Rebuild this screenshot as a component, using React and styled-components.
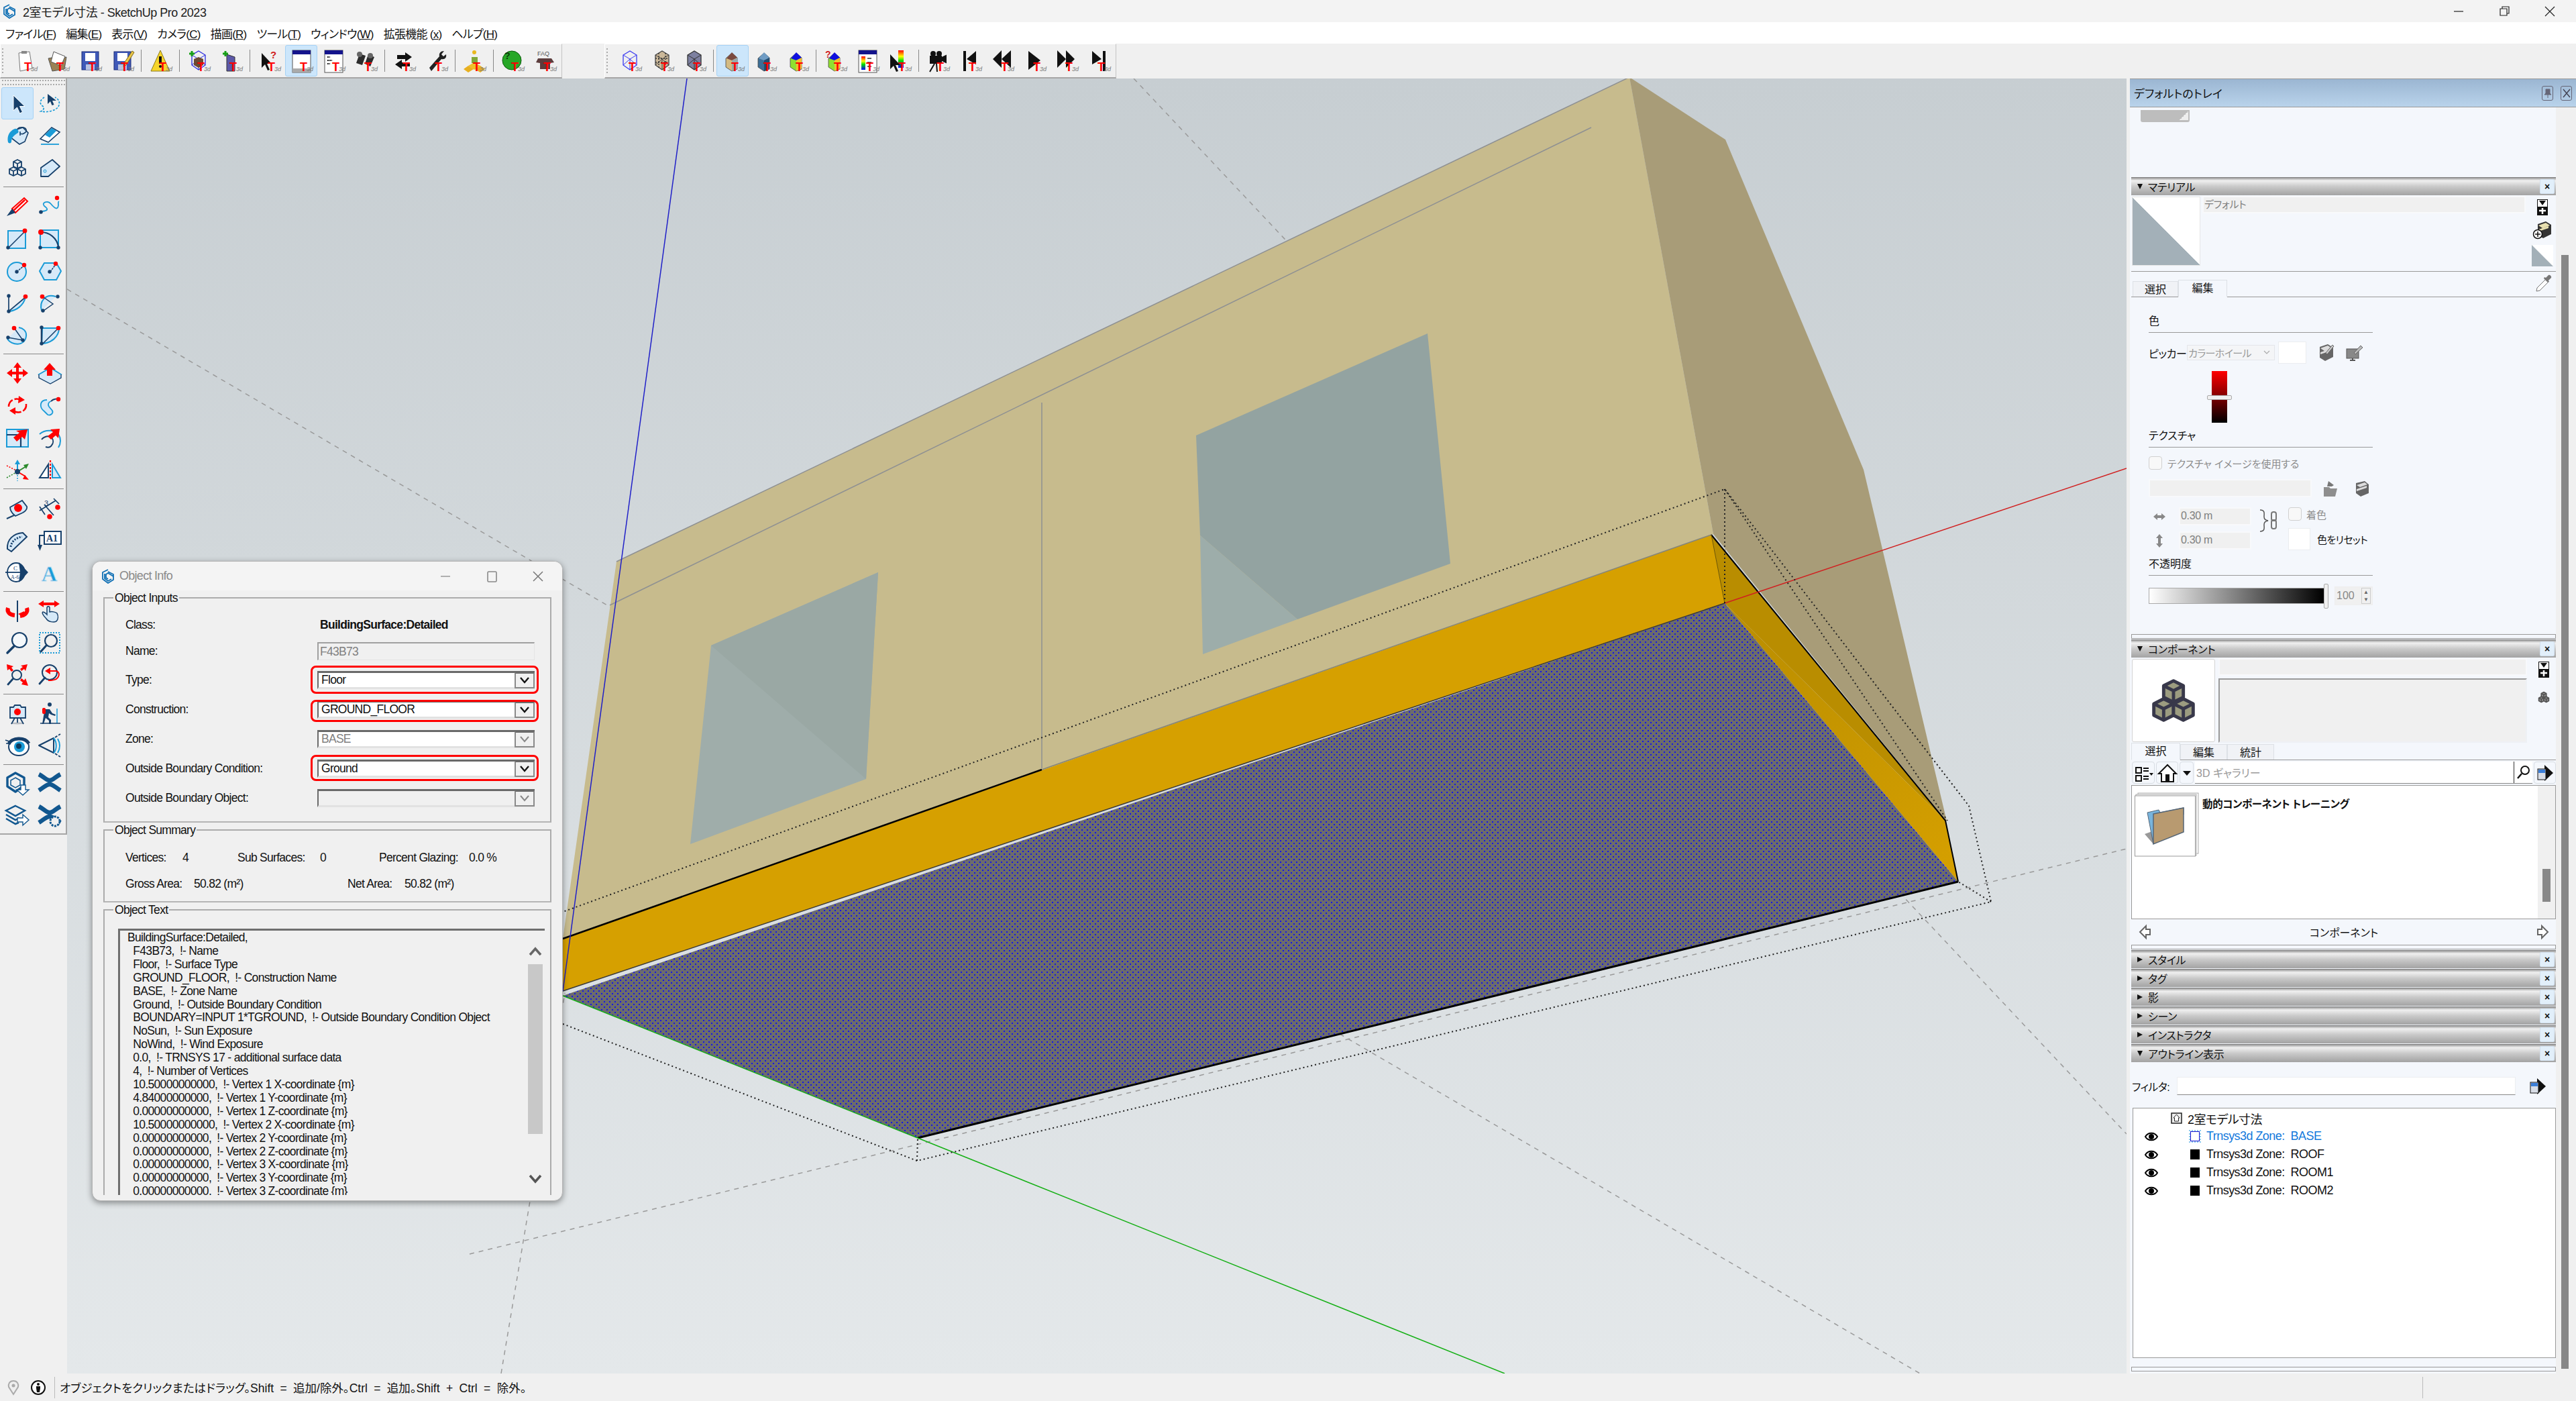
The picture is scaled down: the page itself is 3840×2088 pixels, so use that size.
import React from "react";
import styled, { createGlobalStyle } from "styled-components";

const UI_FONT = `"Liberation Sans", "Noto Sans CJK JP", sans-serif`;
const N = "#17406b";
const B = "#1a9bd7";
const L = "#d6e9f8";
const R = "#ff0000";
const TB = "#11578f";

const GlobalStyle = createGlobalStyle`
  html, body { margin: 0; padding: 0; background: #f0f0f0; }
  * { box-sizing: border-box; }
  body { font-family: ${UI_FONT}; font-feature-settings: "palt"; color: #111; }
`;

const Page = styled.div`
  width: 3840px;
  height: 2088px;
  display: flex;
  flex-direction: column;
  overflow: hidden;
  background: #f0f0f0;
`;

/* ---------- title + menu ---------- */
const TitleBar = styled.header`
  height: 33px;
  display: flex;
  align-items: center;
  padding-left: 3px;
  background: #f3f3f3;
  font-size: 18px;
  letter-spacing: -0.5px;
  color: #222;
  span { margin-left: 9px; }
`;
const WinControls = styled.div`
  margin-left: auto;
  display: flex;
  align-items: center;
  padding-right: ${(p) => p.$pr}px;
  gap: ${(p) => p.$gap}px;
`;
const MenuBar = styled.nav`
  height: 32px;
  display: flex;
  align-items: center;
  gap: 15px;
  padding-left: 8px;
  background: #fff;
  font-size: 17px;
  letter-spacing: -0.75px;
`;
const MenuItem = styled.span`
  white-space: pre;
`;

/* ---------- top toolbars ---------- */
const ToolRow = styled.div`
  height: 52px;
  display: flex;
  background: #f0f0f0;
`;
const ToolStrip = styled.div`
  display: flex;
  height: 52px;
  align-items: center;
  margin-left: ${(p) => p.$left || 0}px;
  padding-left: 13px;
  padding-right: 1px;
  border-top: 1px solid #fff;
  border-left: 1px solid #fff;
  border-right: 1px solid #c4c4c4;
  border-bottom: 2px solid #a6a6a6;
  background: #f0f0f0;
  position: relative;
  &::before {
    content: "";
    position: absolute;
    left: 2px;
    top: 6px;
    bottom: 6px;
    width: 2px;
    background: repeating-linear-gradient(#aaa 0 2px, transparent 2px 5px);
  }
`;
const ToolButton = styled.div`
  width: 48px;
  height: 47px;
  flex: none;
  display: flex;
  align-items: center;
  justify-content: center;
  border: 1px solid ${(p) => (p.$active ? "#a6d2f5" : "transparent")};
  border-radius: 3px;
  background: ${(p) => (p.$active ? "#cce6fb" : "transparent")};
`;
const ToolSep = styled.div`
  width: 9px;
  height: 33px;
  flex: none;
  background: linear-gradient(#888, #888) center / 1px 100% no-repeat;
`;

/* ---------- middle ---------- */
const Middle = styled.div`
  flex: 1;
  display: flex;
  min-height: 0;
`;
const LeftDock = styled.aside`
  width: 100px;
  flex: none;
  background: #f0f0f0;
`;
const LeftBar = styled.div`
  height: 1127px;
  padding-left: 2px;
  border-right: 2px solid #a6a6a6;
  border-bottom: 2px solid #a6a6a6;
`;
const LeftHandle = styled.div`
  height: 13px;
  width: 96px;
  background: radial-gradient(circle, #aaa 1px, transparent 1.3px) 0 0 / 4px 6px;
`;
const LeftGrid = styled.div`
  display: grid;
  grid-template-columns: 48px 48px;
  grid-auto-rows: 48px;
`;
const LeftSep = styled.div`
  height: 9px;
  margin: 0 3px;
  background: linear-gradient(#888, #888) center / 100% 1px no-repeat;
`;
const LeftButton = styled(ToolButton)`
  height: 48px;
`;

const Viewport = styled.main`
  position: relative;
  width: 3070px;
  flex: none;
  background: linear-gradient(#c7ced2, #e4e8ea);
  overflow: hidden;
`;
const Scene = styled.svg`
  display: block;
`;

/* ---------- object info dialog ---------- */
const Dialog = styled.section`
  position: absolute;
  left: 37px;
  top: 719px;
  width: 702px;
  height: 954px;
  background: #f0f0f0;
  border: 1px solid #b4b4b4;
  border-radius: 13px;
  box-shadow: 0 3px 10px rgba(0, 0, 0, 0.4);
  overflow: hidden;
  font-size: 17.5px;
  letter-spacing: -0.72px;
  color: #111;
`;
const DialogTitle = styled.div`
  height: 43px;
  display: flex;
  align-items: center;
  padding-left: 12px;
  background: #f4f4f4;
  font-size: 18px;
  color: #8a8a8a;
  span { margin-left: 6px; }
`;
const DialogBody = styled.div`
  height: 901px;
  padding: 0 16px;
  overflow: hidden;
`;
const Group = styled.fieldset`
  margin: 0;
  min-width: 0;
  height: ${(p) => p.$h}px;
  padding: 0 ${(p) => p.$pr || 0}px 0 ${(p) => p.$pl}px;
  border: 2px solid #ababab;
  border-bottom-color: #b5b5b5;
  legend {
    margin-left: ${(p) => 13 - p.$pl}px;
    padding: 0 2px;
    line-height: 22px;
    font-size: 17.5px;
  }
`;
const FormRow = styled.div`
  display: flex;
  align-items: center;
  height: 27px;
  margin-top: ${(p) => p.$mt}px;
`;
const FormLabel = styled.label`
  width: 286px;
  flex: none;
`;
const FormValue = styled.b`
  padding-left: 4px;
`;
const NameInput = styled.div`
  width: 324px;
  height: 27px;
  padding-left: 2px;
  line-height: 24px;
  color: #808080;
  background: #f0f0f0;
  border-top: 2px solid #a0a0a0;
  border-left: 2px solid #a0a0a0;
  border-right: 1px solid #e4e4e4;
  border-bottom: 1px solid #e4e4e4;
`;
const Combo = styled.div`
  position: relative;
  width: 324px;
  height: 27px;
  display: flex;
  align-items: center;
  padding-left: 4px;
  color: ${(p) => (p.$disabled ? "#808080" : "#111")};
  background: ${(p) => (p.$empty ? "#f0f0f0" : "#fff")};
  border-top: 3px solid #6a6a6a;
  border-left: 2px solid #6a6a6a;
  border-bottom: 3px solid #e2e2e2;
  ${(p) =>
    p.$ring &&
    `&::after {
      content: "";
      position: absolute;
      left: -12px;
      right: -6px;
      top: ${p.$ring[0]}px;
      bottom: ${p.$ring[1]}px;
      border: 3.5px solid #f00;
      border-radius: 8px;
      pointer-events: none;
    }`}
`;
const ComboArrow = styled.div`
  position: absolute;
  right: 0;
  top: -1px;
  width: 30px;
  height: 24px;
  display: flex;
  align-items: center;
  justify-content: center;
  background: #f0f0f0;
  border: 2px solid #8a8a8a;
  border-top-color: #6a6a6a;
`;
const SummaryRow = styled.div`
  display: grid;
  grid-template-columns: ${(p) => p.$cols};
  height: 24px;
  line-height: 24px;
  margin-top: ${(p) => p.$mt}px;
`;
const TextBox = styled.div`
  display: flex;
  height: 397px;
  margin-top: 17px;
  border-top: 3px solid #6f6f6f;
  border-left: 3px solid #6f6f6f;
  overflow: hidden;
`;
const TextLines = styled.pre`
  flex: 1;
  margin: 0;
  padding: 1px 0 0 11px;
  font: inherit;
  letter-spacing: -0.7px;
  line-height: 19.9px;
  white-space: pre;
`;
const TextScroll = styled.div`
  width: 22px;
  margin-right: 3px;
  flex: none;
  display: flex;
  flex-direction: column;
  align-items: center;
  padding-top: 24px;
`;
const TextThumb = styled.div`
  width: 22px;
  height: 253px;
  margin: 12px 0 60px;
  background: #c8c8c8;
`;

/* ---------- tray ---------- */
const Tray = styled.aside`
  width: 665px;
  flex: none;
  margin-left: 5px;
  display: flex;
  flex-direction: column;
`;
const TrayTitle = styled.div`
  height: 43px;
  display: flex;
  align-items: center;
  gap: 11px;
  padding: 0 6px;
  border-top: 1px solid #999;
  border-bottom: 1px solid #999;
  background: linear-gradient(#9bb6d2, #b9d3eb);
  font-size: 17px;
  span { margin-right: auto; }
`;
const TrayPin = styled.div`
  width: 17px;
  height: 22px;
  border: 1px solid #667;
  border-radius: 3px;
  display: flex;
  align-items: center;
  justify-content: center;
`;
const TrayBody = styled.div`
  flex: 1;
  display: flex;
  min-height: 0;
`;
const Panels = styled.div`
  width: 635px;
  flex: none;
  padding-left: 2px;
  background: #f4f7fc;
  overflow: hidden;
`;
const TrayGripRow = styled.div`
  height: 104px;
  padding: 4px 0 0 14px;
`;
const TrayGrip = styled.div`
  position: relative;
  width: 73px;
  height: 18px;
  background: #bdbdbd;
  border-radius: 0 0 3px 3px;
  &::after {
    content: "";
    position: absolute;
    right: 2px;
    bottom: 3px;
    width: 13px;
    height: 13px;
    background: linear-gradient(135deg, transparent 50%, #eee 50%);
  }
`;
const TrayScroll = styled.div`
  flex: 1;
  padding: 220px 11px 7px 8px;
  background: #f0f0f0;
`;
const TrayThumb = styled.div`
  height: 100%;
  background: #878787;
`;
const PanelHeader = styled.div`
  height: 27px;
  margin-bottom: ${(p) => p.$mb || 0}px;
  display: flex;
  align-items: center;
  padding-left: 9px;
  border-top: 1px solid #808080;
  background: linear-gradient(#9a9a9a, #f0f0f0 16%, #c9c9c9 50%, #a3a3a3);
  font-size: 16px;
  letter-spacing: -0.3px;
`;
const Caret = styled.div`
  width: 0;
  height: 0;
  margin-right: 8px;
  ${(p) =>
    p.$open
      ? "border-left: 4px solid transparent; border-right: 4px solid transparent; border-top: 8px solid #111;"
      : "border-top: 4px solid transparent; border-bottom: 4px solid transparent; border-left: 8px solid #111;"}
`;
const PanelClose = styled.div`
  margin-left: auto;
  width: 22px;
  height: 22px;
  margin-right: 2px;
  display: flex;
  align-items: center;
  justify-content: center;
  background: #e2effa;
  border: 1px solid #d2e0ee;
  border-radius: 2px;
  font-size: 14px;
  font-weight: bold;
`;
const ThinBox = styled.div`
  height: 7px;
  margin-top: ${(p) => p.$mt || 0}px;
  margin-bottom: 1px;
  border: 1px solid #999;
`;
const TopRow = styled.div`
  display: flex;
  height: ${(p) => p.$h}px;
  padding-top: 1px;
  border-bottom: ${(p) => (p.$rule ? "1px solid #999" : "none")};
`;
const Swatch = styled.div`
  width: 102px;
  height: 103px;
  margin: 1px 3px 0 1px;
  flex: none;
  background: linear-gradient(to top right, #a3b0b8 50%, #fff 50%);
  border: 1px solid #e6e6e6;
`;
const GreyField = styled.div`
  width: ${(p) => p.$w}px;
  height: ${(p) => p.$h}px;
  margin-top: ${(p) => p.$mt || 0}px;
  padding-left: 1px;
  line-height: 21px;
  font-size: ${(p) => p.$fs || 15}px;
  letter-spacing: -0.3px;
  color: #808080;
  background: #f0f0f0;
  border: 2px solid ${(p) => (p.$sunken ? "#eef1f5" : "#f8f9fb")};
  ${(p) => p.$sunken && "border-top-color:#999; border-left-color:#999;"}
`;
const SideIcons = styled.div`
  width: 40px;
  margin-left: 5px;
  flex: none;
  display: flex;
  flex-direction: column;
  align-items: center;
  gap: ${(p) => p.$gap}px;
  padding-top: 5px;
`;
const Tabs = styled.div`
  display: flex;
  align-items: flex-end;
  height: ${(p) => p.$h}px;
  padding-left: ${(p) => p.$pl || 0}px;
  border-bottom: 1px solid #999;
`;
const Tab = styled.div`
  width: ${(p) => p.$w}px;
  height: ${(p) => (p.$active ? 26 : 23)}px;
  text-align: center;
  font-size: 16px;
  line-height: 23px;
  background: ${(p) => (p.$active ? "#f4f7fc" : "#f0f2f6")};
  border: 1px solid #dde1e6;
  border-bottom: ${(p) => (p.$active ? "1px solid #f4f7fc" : "none")};
  margin-bottom: ${(p) => (p.$active ? -1 : 0)}px;
  position: relative;
`;
const TabIcon = styled.div`
  margin-left: auto;
  margin-right: 4px;
  align-self: center;
`;
const Editor = styled.div`
  height: 502px;
  padding-left: 26px;
  font-size: 16px;
`;
const SectionHead = styled.div`
  width: 334px;
  height: ${(p) => p.$h}px;
  display: flex;
  align-items: flex-end;
  padding-bottom: 5px;
  border-bottom: 1px solid #999;
  line-height: 22px;
`;
const PickerRow = styled.div`
  display: flex;
  align-items: center;
  height: 33px;
  margin-top: 13px;
  letter-spacing: -0.4px;
`;
const PickerLabel = styled.span`
  width: 54px;
  flex: none;
  white-space: nowrap;
`;
const PickerSelect = styled.div`
  width: 131px;
  height: 23px;
  margin-left: 3px;
  padding: 0 6px 0 1px;
  display: flex;
  align-items: center;
  justify-content: space-between;
  color: #999;
  font-size: 15px;
  letter-spacing: -0.6px;
  border: 1px solid #e4e6ea;
  background: #f4f5f7;
`;
const WhiteSwatch = styled.div`
  width: ${(p) => p.$w}px;
  height: ${(p) => p.$h}px;
  flex: none;
  margin-left: ${(p) => p.$ml || 0}px;
  background: #fff;
  border: 1px solid #ebedf0;
`;
const PickerIcon = styled.div`
  margin-left: ${(p) => p.$ml}px;
  display: flex;
`;
const ColorSlider = styled.div`
  position: relative;
  width: 23px;
  height: 77px;
  margin: 11px 0 0 94px;
  background: linear-gradient(#f00, #000);
`;
const SliderHandle = styled.div`
  position: absolute;
  left: -7px;
  top: 36px;
  width: 37px;
  height: 7px;
  background: #f0f0f0;
  border: 1px solid #aaa;
  border-radius: 2px;
`;
const CheckRow = styled.div`
  display: flex;
  align-items: center;
  gap: ${(p) => p.$gap || 8}px;
  height: 20px;
  margin-top: ${(p) => p.$mt || 0}px;
  color: #8c8c8c;
  font-size: 15px;
`;
const CheckBox = styled.div`
  width: 20px;
  height: 20px;
  flex: none;
  background: #f8f8f8;
  border: 1px solid #d0d0d0;
  border-radius: 4px;
`;
const FlatInput = styled.div`
  display: flex;
  align-items: center;
  height: 27px;
  margin-top: 14px;
  gap: 16px;
`;
const SizeRow = styled.div`
  display: flex;
  margin-top: 15px;
  height: 64px;
`;
const SizeFields = styled.div`
  width: 162px;
  flex: none;
  display: flex;
  flex-direction: column;
  gap: 9px;
`;
const SizeField = styled.div`
  display: flex;
  align-items: center;
  padding-left: 6px;
  gap: 19px;
`;
const TintCol = styled.div`
  margin-left: 6px;
  display: flex;
  flex-direction: column;
  gap: 11px;
`;
const ResetRow = styled.div`
  display: flex;
  align-items: center;
  gap: 10px;
  font-size: 15px;
  letter-spacing: -0.6px;
  white-space: nowrap;
`;
const OpacityRow = styled.div`
  display: flex;
  align-items: center;
  margin-top: 16px;
  height: 28px;
`;
const OpacityBar = styled.div`
  position: relative;
  width: 261px;
  height: 24px;
  background: linear-gradient(90deg, #fff, #000);
  border: 1px solid #aaa;
  border-right: none;
`;
const OpacityHandle = styled.div`
  position: absolute;
  right: -7px;
  top: -7px;
  width: 7px;
  height: 37px;
  background: #f0f0f0;
  border: 1px solid #aaa;
  border-radius: 2px;
`;
const SpinBox = styled.div`
  width: 57px;
  height: 28px;
  margin-left: 16px;
  display: flex;
  align-items: center;
  justify-content: space-between;
  padding: 0 2px;
  color: #888;
  font-size: 16px;
  background: #f0f0f0;
  border: 1px solid #eee;
`;
const SpinArrows = styled.div`
  display: flex;
  flex-direction: column;
  width: 14px;
  height: 24px;
  border: 1px solid #ccc;
  font-size: 8px;
  line-height: 11px;
  text-align: center;
  color: #666;
`;
const Thumb = styled.div`
  width: 124px;
  height: 124px;
  margin: 1px 5px 0 1px;
  flex: none;
  display: flex;
  align-items: center;
  justify-content: center;
  background: #fff;
  border: 1px solid #d4d4d4;
  border-radius: 3px;
`;
const CompFields = styled.div`
  display: flex;
  flex-direction: column;
`;
const Toolbox = styled.div`
  display: flex;
  height: 33px;
  margin: 2px 0 2px 1px;
  gap: 2px;
`;
const SquareBtn = styled.div`
  width: ${(p) => p.$w}px;
  flex: none;
  display: flex;
  align-items: center;
  justify-content: center;
  background: #f4f7fc;
  border: 1px solid #d8dde3;
  border-radius: 4px;
`;
const SearchBox = styled.div`
  flex: 1;
  display: flex;
  align-items: center;
  justify-content: space-between;
  background: #fff;
  border-bottom: 1px solid #888;
  color: #999;
  font-size: 16px;
  padding-left: 2px;
`;
const SearchGlass = styled.div`
  width: 28px;
  height: 100%;
  display: flex;
  align-items: center;
  justify-content: center;
  border-left: 1px solid #333;
`;
const ListBox = styled.div`
  display: flex;
  height: 200px;
  background: #fff;
  border: 1px solid #999;
`;
const ListMain = styled.div`
  flex: 1;
  display: flex;
  padding: 10px 0 0 4px;
  gap: 5px;
`;
const ListText = styled.b`
  font-size: 15.5px;
  letter-spacing: -0.3px;
  line-height: 36px;
`;
const ListScroll = styled.div`
  width: 26px;
  padding: 124px 7px 0 7px;
  background: #f0f0f0;
`;
const ListThumb = styled.div`
  height: 49px;
  background: #888;
`;
const CompFooter = styled.div`
  height: 38px;
  display: flex;
  align-items: center;
  justify-content: space-between;
  padding: 0 10px 0 11px;
  font-size: 16px;
`;
const FilterRow = styled.div`
  display: flex;
  align-items: center;
  height: 27px;
  margin-top: 22px;
  font-size: 16px;
  letter-spacing: -0.5px;
  padding-left: 1px;
`;
const FilterInput = styled.div`
  width: 505px;
  height: 27px;
  margin-left: 11px;
  margin-right: 20px;
  background: #fff;
  border: 1px solid #eceef1;
  border-bottom: 1px solid #888;
`;
const Tree = styled.div`
  height: 373px;
  margin: 19px 0 0 2px;
  padding-top: 1px;
  background: #fff;
  border: 1px solid #999;
  font-size: 18px;
  letter-spacing: -0.55px;
`;
const TreeRow = styled.div`
  display: flex;
  align-items: center;
  height: 27px;
  padding-left: ${(p) => p.$pl}px;
  gap: ${(p) => p.$gap}px;
  color: ${(p) => p.$color || "#111"};
`;
const EyeSlot = styled.div`
  width: 20px;
  flex: none;
  margin-right: 38px;
  display: flex;
`;
const ZoneMark = styled.div`
  width: 14px;
  height: 15px;
  flex: none;
  background: ${(p) => (p.$hollow ? "#fff" : "#000")};
  border: ${(p) => (p.$hollow ? "1px solid #1414d0" : "none")};
  outline: ${(p) => (p.$hollow ? "2px dotted #8cc8ee" : "none")};
`;

/* ---------- status bar ---------- */
const StatusBar = styled.footer`
  height: 41px;
  display: flex;
  align-items: center;
  padding-left: 9px;
  background: #f0f0f0;
  font-size: 17.5px;
  word-spacing: 4.5px;
`;
const StatusInfo = styled.div`
  margin-left: 14px;
  display: flex;
`;
const StatusDivider = styled.div`
  width: 1px;
  height: 32px;
  flex: none;
  background: #bbb;
  margin-left: ${(p) => p.$ml || 0}px;
`;
const StatusText = styled.span`
  margin-left: 7px;
  white-space: pre;
  width: 3522px;
  flex: none;
`;

/* ---------- small drawings ---------- */
const Glyph = ({ size = 36, vb = 36, children }) => (
  <svg width={size} height={size} viewBox={`0 0 ${vb} ${vb}`} fill="none" overflow="visible">
    {children}
  </svg>
);
const Dot = ({ x, y, c = N, r = 2.7 }) => <circle cx={x} cy={y} r={r} fill={c} />;

const SkpLogo = ({ size = 22 }) => (
  <svg width={size} height={size} viewBox="0 0 22 22" fill="none" stroke="#0f6fb4" strokeWidth="1.8">
    <path d="M11 1 3 5v10l8 6 8-5V11l-8-5-3 2v5l3 2" />
    <path d="M11 4l8 4v3M6 7v7l5 4 5-3" />
  </svg>
);

const CHEVRON_BLACK = (
  <svg width="14" height="10" viewBox="0 0 14 10" fill="none" stroke="#111" strokeWidth="2.4">
    <path d="M1 1l6 7 6-7" />
  </svg>
);
const CHEVRON_GREY = (
  <svg width="14" height="10" viewBox="0 0 14 10" fill="none" stroke="#888" strokeWidth="2">
    <path d="M1 1l6 7 6-7" />
  </svg>
);

const Cubes = ({ c = N, fill = "none", sw = 1.8 }) => (
  <g stroke={c} strokeWidth={sw} fill={fill} strokeLinejoin="round">
    <path d="M18 6l6 3v7l-6 3-6-3V9z" />
    <path d="M12 9l6 3 6-3M18 12v7" />
    <path d="M12 17l6 3v7l-6 3-6-3v-7z" />
    <path d="M6 20l6 3 6-3M12 23v7" />
    <path d="M24 17l6 3v7l-6 3-6-3v-7z" />
    <path d="M18 20l6 3 6-3M24 23v7" />
  </g>
);

const TrimbleX = () => (
  <g stroke={TB} strokeWidth="6.5" fill="none">
    <path d="M2 4c8 4 11 9 16 9s8-5 16-9" />
    <path d="M2 28c8-5 11-9 16-9s8 4 16 9" />
  </g>
);

const TOOLS = {
  select: <path d="M12 6v23l5.5-5 4 9 4-2-4-8.5h7.5z" fill={N} stroke="#fff" />,
  lasso: (
    <>
      <path d="M15 4v15l4-4 2.5 6 3-1-2.5-6h6z" fill={N} />
      <path d="M10 9c-8 5-7 11-1 14 1 3-1 6-4 7 9 2 22-1 26-7 3-6 1-11-5-14" stroke={B} strokeWidth="1.7" strokeDasharray="3 2" />
    </>
  ),
  paint: (
    <>
      <path d="M14 10l12-4 8 8-5 13-8 4-13-10z" fill={L} stroke={N} strokeWidth="1.6" />
      <path d="M18 8c3-3 11-3 13 1s-6 8-8 6M22 12v6" stroke={N} strokeWidth="1.6" />
      <path d="M14 8C6 11 2 19 4 28c1 2 5 2 5-1 0-7 6-11 10-13 2-3-2-7-5-6z" fill={B} />
    </>
  ),
  eraser: (
    <>
      <path d="M4 23L21 6l12 7-17 15z" fill="#fff" stroke={N} strokeWidth="1.6" />
      <path d="M11 17l10-10 7 4-10 10z" fill={B} />
      <path d="M5 31h27" stroke={B} strokeWidth="1.8" />
    </>
  ),
  components: <Cubes />,
  tag: (
    <>
      <path d="M5 18L22 6l11 10-17 15H5z" fill={L} stroke={N} strokeWidth="1.8" strokeLinejoin="round" />
      <circle cx="11" cy="23" r="2" stroke={B} />
    </>
  ),
  pencil: (
    <>
      <path d="M10 22L28 6l5 5-18 17z" fill="#fff" stroke={R} strokeWidth="2" />
      <path d="M13 24L29 9" stroke={R} strokeWidth="2.5" />
      <path d="M2 33l8-11 5 6z" fill={N} />
    </>
  ),
  freehand: (
    <>
      <path d="M7 26c8-1 10-3 3-8-5-5 5-9 10-3s10 10 11 2c0-4-1-5 1-6" stroke={B} strokeWidth="1.8" />
      <Dot x={29} y={6} c={R} r={3.2} />
      <Dot x={5} y={27} r={2.8} />
    </>
  ),
  rect: (
    <>
      <rect x="4" y="7" width="26" height="26" fill={L} stroke={B} strokeWidth="2" />
      <path d="M5 32L29 8" stroke={N} strokeWidth="1.6" />
      <Dot x={4} y={32} />
      <Dot x={29} y={7} c={R} r={3.4} />
    </>
  ),
  rotrect: (
    <>
      <path d="M4 6h27v26H4z" fill={L} stroke={B} strokeWidth="2" />
      <path d="M5 9c13 0 24 9 26 22" stroke={N} strokeWidth="2" />
      <Dot x={4} y={32} />
      <Dot x={31} y={32} />
      <Dot x={5} y={9} c={R} r={4} />
    </>
  ),
  circle: (
    <>
      <circle cx="17" cy="20" r="14" fill={L} stroke={B} strokeWidth="2" />
      <path d="M17 20l12-10" stroke={N} strokeWidth="1.5" strokeDasharray="3 1" />
      <Dot x={17} y={20} />
      <Dot x={28} y={10} c={R} r={3.2} />
    </>
  ),
  polygon: (
    <>
      <path d="M10 7h18l7 12-7 13H10L3 19z" fill={L} stroke={B} strokeWidth="2" />
      <path d="M19 20l8-11" stroke={N} strokeWidth="1.5" strokeDasharray="3 1" />
      <Dot x={18} y={20} />
      <Dot x={27} y={8} c={R} r={3.2} />
    </>
  ),
  arc1: (
    <>
      <path d="M5 31c12-1 22-9 25-21" fill={L} stroke={B} strokeWidth="2" />
      <path d="M5 8v23L30 10" stroke={N} strokeWidth="1.7" />
      <Dot x={5} y={8} />
      <Dot x={5} y={31} />
      <Dot x={30} y={9} c={R} r={3.3} />
    </>
  ),
  arc2: (
    <>
      <path d="M6 30C2 16 12 4 27 9" fill={L} stroke={B} strokeWidth="2" />
      <path d="M6 8l17 12-14 10" stroke={N} strokeWidth="1.5" />
      <Dot x={8} y={30} />
      <Dot x={30} y={9} />
      <Dot x={7} y={9} c={R} r={3.3} />
    </>
  ),
  arc3: (
    <>
      <path d="M3 24c6 10 26 12 28-4C32 12 26 8 20 7" fill={L} stroke={B} strokeWidth="2" />
      <path d="M4 22l22 4L14 9" stroke={N} strokeWidth="1.5" />
      <Dot x={4} y={22} />
      <Dot x={26} y={26} />
      <Dot x={13} y={8} c={R} r={3.3} />
    </>
  ),
  arc4: (
    <>
      <path d="M6 31c14 0 26-10 26-23H7z" fill={L} stroke={B} strokeWidth="2" />
      <path d="M6 8v23" stroke={N} strokeWidth="2.5" />
      <path d="M8 31L30 9" stroke={N} strokeWidth="1.5" />
      <Dot x={6} y={7} />
      <Dot x={6} y={31} />
      <Dot x={31} y={8} c={R} r={3.3} />
    </>
  ),
  move: <path d="M18 2l6 8h-4v6h6v-4l8 6-8 6v-4h-6v6h4l-6 8-6-8h4v-6h-6v4l-8-6 8-6v4h6v-6h-4z" fill={R} />,
  pushpull: (
    <>
      <path d="M2 20l14-8h6l13 8-16 10z" fill={L} stroke={B} strokeWidth="1.8" />
      <path d="M2 20v5l17 9 16-9v-5" fill={L} stroke={N} strokeWidth="1.4" />
      <path d="M18 3l9 10h-5v9h-8v-9H9z" fill={R} />
    </>
  ),
  rotate: (
    <>
      <path d="M5 20C5 11 14 6 23 10" stroke={R} strokeWidth="2.5" strokeDasharray="12 3" />
      <path d="M31 16c1 10-9 15-18 11" stroke={R} strokeWidth="2.5" strokeDasharray="12 3" />
      <path d="M20 4l9 6-10 5zM15 21l-9 5 9 6z" fill={R} />
    </>
  ),
  follow: (
    <>
      <path d="M14 10C3 10 2 21 10 27l5 5c4 2 9-2 7-6l-5-6c-2-3-1-7 3-8" fill={L} stroke={B} strokeWidth="1.8" />
      <path d="M20 12c4-4 9-4 12-2" stroke={N} strokeWidth="1.8" />
      <Dot x={31} y={9} c={R} r={3.2} />
    </>
  ),
  scale: (
    <>
      <rect x="2" y="6" width="32" height="26" fill={L} stroke={B} strokeWidth="2" />
      <path d="M2 14h21v18" stroke={N} strokeWidth="2.2" fill="none" />
      <path d="M33 6l-4 15-4-4-8 7-5-6 9-7-5-3z" fill={R} />
    </>
  ),
  offset: (
    <>
      <path d="M3 13C11 6 24 6 31 13c4 6 4 14 0 20" stroke={B} strokeWidth="2" />
      <path d="M6 21c4-5 10-6 15-3 3 4 3 9-1 13-2 2-5 2-8 1" stroke={N} strokeWidth="2" />
      <path d="M33 5l-2 14-4-4-7 6-5-5 8-6-4-4z" fill={R} />
    </>
  ),
  axes: (
    <>
      <path d="M18 19V8" stroke={B} strokeWidth="2" />
      <path d="M18 3l4 7h-8z" fill={B} />
      <path d="M18 21l13-8" stroke="#2c8a2c" strokeWidth="2" />
      <path d="M35 9l-4 8-4-6z" fill="#2c8a2c" />
      <path d="M18 21l12 7" stroke={R} strokeWidth="2" />
      <path d="M35 33l-9-1 3-6z" fill={R} />
      <path d="M2 12l14 7" stroke={R} strokeWidth="1.5" strokeDasharray="2 2" />
      <path d="M2 30l14-8" stroke="#2c8a2c" strokeWidth="1.5" strokeDasharray="2 2" />
      <path d="M18 26v9" stroke={B} strokeWidth="1.5" strokeDasharray="2 2" />
      <Dot x={18} y={21} r={4} />
    </>
  ),
  mirror: (
    <>
      <path d="M3 30L16 10v20z" fill="#fff" stroke={N} strokeWidth="2" />
      <path d="M22 10l12 20H22z" fill={L} stroke={B} strokeWidth="2" />
      <path d="M19 4v30" stroke={R} strokeWidth="2.2" strokeDasharray="3 2" />
    </>
  ),
  tape: (
    <>
      <path d="M7 17L25 7l7 9c1 4-3 8-8 10l-9 4c-4-3-8-8-8-13z" fill={L} stroke={N} strokeWidth="1.8" />
      <circle cx="19" cy="18" r="6" fill={R} />
      <path d="M2 34l11-5" stroke={N} strokeWidth="2" />
    </>
  ),
  dimension: (
    <>
      <path d="M3 22L27 7M10 13l14 16M24 4l8 8M3 16l8 12" stroke={N} strokeWidth="1.7" />
      <text x="10" y="15" fontSize="11" fill={N} fontFamily="Liberation Sans">3</text>
      <Dot x={30} y={17} c={R} r={3.8} />
      <Dot x={18} y={31} c={R} r={3.8} />
    </>
  ),
  protractor: (
    <>
      <path d="M3 31C2 17 12 8 26 7l6 6L9 35z" fill={L} stroke={N} strokeWidth="2" />
      <path d="M8 28C9 20 16 14 25 13" stroke={N} strokeWidth="3" strokeDasharray="2 2" />
    </>
  ),
  label: (
    <>
      <rect x="10" y="5" width="25" height="19" fill="#fff" stroke={N} strokeWidth="2" />
      <text x="13" y="20" fontSize="14" fontWeight="bold" fill={N} fontFamily="Liberation Serif">A1</text>
      <path d="M10 11H3v18" stroke={N} strokeWidth="2" />
      <path d="M0 25h7l-3.5 9z" fill={N} />
    </>
  ),
  section: (
    <>
      <ellipse cx="16" cy="18" rx="13" ry="14" fill="#fff" stroke={N} strokeWidth="1.8" />
      <path d="M0 18h28" stroke={N} strokeWidth="1.8" />
      <path d="M20 3l14 15-14 15 2-15z" fill={N} />
      <text x="12" y="15" fontSize="9" fill={N} fontFamily="Liberation Serif">C</text>
      <text x="8" y="28" fontSize="8" fill={N} fontFamily="Liberation Serif">A-6</text>
    </>
  ),
  text3d: (
    <text x="6" y="31" fontSize="32" fontWeight="bold" fill={B} fontFamily="Liberation Serif" stroke="#bfdcf0" strokeWidth="1">A</text>
  ),
  orbit: (
    <>
      <path d="M4 14C2 20 6 24 14 25M32 14c2 6-2 11-10 12" stroke={R} strokeWidth="6" />
      <path d="M18 3v32" stroke={N} strokeWidth="2" />
      <path d="M19 23l9-4v9z" fill={R} />
    </>
  ),
  pan: (
    <>
      <path d="M1 8l8-5v3h16V3l8 5-8 5v-3H9v3z" fill={R} />
      <path d="M13 30C8 25 6 21 8 20c3 0 4 2 6 4V14c0-3 4-3 4 0v6c3-1 9 0 11 2 2 4 2 9-1 12-4 2-12 1-15-4z" fill={L} stroke={N} strokeWidth="1.5" />
    </>
  ),
  zoom: (
    <>
      <circle cx="21" cy="14" r="11" fill="#f4f8fb" stroke={N} strokeWidth="2.2" />
      <path d="M13 23L3 33" stroke={N} strokeWidth="3.5" strokeLinecap="round" />
    </>
  ),
  zoomwin: (
    <>
      <rect x="3" y="3" width="30" height="30" stroke={B} strokeWidth="2" strokeDasharray="2 2" />
      <circle cx="20" cy="15" r="9" stroke={N} strokeWidth="2.2" />
      <path d="M13 22l-8 9" stroke={N} strokeWidth="3" strokeLinecap="round" />
    </>
  ),
  zoomext: (
    <>
      <circle cx="17" cy="18" r="7" stroke={N} strokeWidth="2" />
      <path d="M11 24l-7 8" stroke={N} strokeWidth="2.8" strokeLinecap="round" />
      <path d="M2 2l10 3-3 2 3 4-3 2-3-4-3 2zM33 2l-3 10-2-3-4 3-2-3 4-3-3-2zM34 34l-10-2 2-3-4-3 2-3 4 3 2-3z" fill={R} />
    </>
  ),
  zoomprev: (
    <>
      <circle cx="18" cy="14" r="11" stroke={N} strokeWidth="2" />
      <path d="M11 22l-8 9" stroke={N} strokeWidth="2.8" strokeLinecap="round" />
      <path d="M19 12h8c7 0 8 13-7 14h-4" stroke={R} strokeWidth="2" />
      <path d="M11 12l8-5v10z" fill={R} />
    </>
  ),
  position: (
    <>
      <ellipse cx="18" cy="33" rx="10" ry="1.5" fill="#b8bcc2" />
      <path d="M7 9h5l2-3h8l2 3h6v16H7z" fill={L} stroke={N} strokeWidth="1.8" />
      <circle cx="18" cy="16" r="5" fill={R} />
      <path d="M14 25l-5 9M22 25l5 9M18 25v7" stroke={N} strokeWidth="1.8" />
    </>
  ),
  walk: (
    <>
      <circle cx="18" cy="5" r="3" fill={N} />
      <path d="M11 12h7l4 6 5 2-1 2-6-2-3-2-1 6 4 4v6h-3v-5l-5-4-3 9H7l2-12z" fill={N} />
      <rect x="7" y="10" width="5" height="9" rx="2" fill={R} />
      <path d="M29 11v22" stroke={B} strokeWidth="1.5" />
      <path d="M4 33h30" stroke={N} strokeWidth="1.5" />
    </>
  ),
  look: (
    <>
      <ellipse cx="20" cy="20" rx="15" ry="13" fill="#fff" stroke={N} strokeWidth="2" />
      <circle cx="21" cy="20" r="8" fill={B} />
      <circle cx="20" cy="19" r="4" fill="#0a3a5e" />
      <path d="M5 16C9 6 29 5 35 15" stroke={N} strokeWidth="5" />
      <path d="M0 10l9 3M1 15l7 0" stroke={N} strokeWidth="1.6" />
    </>
  ),
  fov: (
    <>
      <path d="M2 18L24 7v22z" stroke={N} strokeWidth="2" strokeLinejoin="round" fill="#f0f0f0" />
      <path d="M24 7c5 6 5 17 0 22" stroke={B} strokeWidth="2" />
      <path d="M30 8c4 7 4 14 0 21" stroke={B} strokeWidth="2" />
      <path d="M26 6l8-5M26 30l8 5" stroke={N} strokeWidth="1.8" strokeDasharray="4 2" />
    </>
  ),
  trim1: (
    <>
      <path d="M15 2l13 7v12l-13 9-12-8V9z" stroke={TB} strokeWidth="3.4" strokeLinejoin="round" />
      <path d="M15 9l7 4v7l-7 4-7-4v-7z" stroke={TB} strokeWidth="1.5" />
      <path d="M23 20h7v7h5l-9 8-9-8h6z" fill="#fff" stroke={TB} strokeWidth="1.4" />
    </>
  ),
  trim2: <TrimbleX />,
  trim3: (
    <>
      <path d="M15 3l14 7-14 8-14-8z" stroke={TB} strokeWidth="2.5" />
      <path d="M1 16l14 8 6-3M1 22l14 8 5-2" stroke={TB} strokeWidth="2.5" />
      <path d="M18 21h8v-5l9 8-9 8v-5h-8z" fill="#fff" stroke={TB} strokeWidth="1.4" />
    </>
  ),
  trim4: (
    <>
      <TrimbleX />
      <circle cx="26" cy="26" r="7" fill="#f0f0f0" stroke={TB} strokeWidth="3" strokeDasharray="3 1.5" />
    </>
  ),
};

const LEFT_GROUPS = [
  ["select", "lasso", "paint", "eraser", "components", "tag"],
  ["pencil", "freehand", "rect", "rotrect", "circle", "polygon", "arc1", "arc2", "arc3", "arc4"],
  ["move", "pushpull", "rotate", "follow", "scale", "offset", "axes", "mirror"],
  ["tape", "dimension", "protractor", "label", "section", "text3d"],
  ["orbit", "pan", "zoom", "zoomwin", "zoomext", "zoomprev"],
  ["position", "walk", "look", "fov"],
  ["trim1", "trim2", "trim3", "trim4"],
];

const Badge = () => (
  <>
    <text x="16" y="33" fontSize="18" fontWeight="bold" fill="#f00" fontFamily="Liberation Sans">T</text>
    <text x="26" y="33" fontSize="9" fontStyle="italic" fill="#777" fontFamily="Liberation Sans">3d</text>
  </>
);

const HOUSE = (wall, roof, side) => (
  <>
    <path d="M8 14l9-8 8 7v17l-8 3-9-6z" fill={wall} stroke="#444" strokeWidth="0.8" />
    <path d="M9 14l8-9 8 8-8 4z" fill={roof} />
    <path d="M17 17l8-4v16l-8 4z" fill={side} />
  </>
);
const WIRE = (stroke, face) => (
  <>
    <path d="M8 9l10-6 10 6v15l-10 7-10-7z" fill={face} stroke={stroke} strokeWidth="1.3" />
    <path d="M8 9l10 6 10-6M18 15v16M8 24l10-9 10 9" stroke={stroke} strokeWidth="1" />
  </>
);
const TOP = {
  fresh: (
    <>
      <path d="M8 6l16-2 4 25-18 4z" fill="#fff" stroke="#777" />
      <path d="M12 3h8v4h-8z" fill="#888" />
    </>
  ),
  open: (
    <>
      <path d="M4 14l10-2 3 3 14-3-3 18-18 3z" fill="#9a8255" stroke="#555" />
      <path d="M12 4l17 7-6 14-15-6z" fill="#fff" stroke="#555" />
    </>
  ),
  save: (
    <>
      <rect x="6" y="4" width="25" height="27" fill="#3f59b8" stroke="#1c2d78" />
      <rect x="11" y="6" width="15" height="12" fill="#fff" />
      <rect x="12" y="23" width="13" height="8" fill="#b8c2e0" />
    </>
  ),
  saveas: (
    <>
      <rect x="6" y="4" width="25" height="27" fill="#3f59b8" stroke="#1c2d78" />
      <rect x="11" y="6" width="15" height="12" fill="#fff" />
      <rect x="12" y="23" width="13" height="8" fill="#b8c2e0" />
      <path d="M33 3l3 2-12 19-4 2 1-5z" fill="#e9c64a" stroke="#7a6514" />
    </>
  ),
  warn: (
    <>
      <path d="M18 2l14 31H4z" fill="#f6d52a" stroke="#8a7a20" />
      <rect x="16" y="11" width="4" height="11" fill="#111" />
      <circle cx="18" cy="26" r="2" fill="#111" />
    </>
  ),
  zone: (
    <>
      {WIRE("#2a2ae0", "none")}
      <path d="M11 15l7-3 7 3v9l-7 4-7-4z" fill="#6b4a34" />
      <path d="M4 7h8M8 3v8" stroke="#18a018" strokeWidth="3" />
    </>
  ),
  windowAdd: (
    <>
      <path d="M12 8l12 4v21H12z" fill="#5c58a8" stroke="#333" />
      <path d="M6 7h8M10 3v8" stroke="#18a018" strokeWidth="3" />
    </>
  ),
  pick: (
    <>
      <path d="M7 6v22l5-5 4 9 3-1-4-9h7z" fill="#111" />
      <text x="20" y="14" fontSize="15" fontWeight="bold" fill="#d02020" fontFamily="Liberation Sans">?</text>
    </>
  ),
  infoWin: (
    <>
      <rect x="5" y="2" width="27" height="33" fill="#fff" stroke="#555" />
      <rect x="5" y="2" width="27" height="6" fill="#14148c" />
      <rect x="5" y="29" width="27" height="6" fill="#aaa" />
    </>
  ),
  listWin: (
    <>
      <rect x="5" y="2" width="27" height="33" fill="#fff" stroke="#555" />
      <rect x="5" y="2" width="27" height="6" fill="#14148c" />
      <path d="M9 12h4M9 17h7M9 22h4" stroke="#111" strokeWidth="2" strokeDasharray="2 1" />
    </>
  ),
  binoculars: (
    <>
      <path d="M9 7l9 3-5 14-9-3zM22 8l9 4-6 14-8-4z" fill="#2c2c2c" />
      <circle cx="9" cy="8" r="4" fill="#666" />
      <circle cx="25" cy="10" r="4" fill="#666" />
    </>
  ),
  swap: <path d="M20 5l10 7-10 7v-4H8v-6h12zM15 16v4h12v6H15v4L5 23z" fill="#111" />,
  wrench: <path d="M30 3c-5 0-8 3-7 8L8 28l3 5 15-18c5 1 8-2 7-7l-4 3-3-3z" fill="#222" />,
  yellowCubes: (
    <>
      <circle cx="18" cy="5" r="3" fill="#e8b820" />
      <rect x="14" y="12" width="9" height="9" fill="#80a838" />
      <path d="M18 20l9 5-9 6-9-6z" fill="#efc028" />
      <path d="M9 25l8 5-8 5-7-5zM27 25l7 5-7 5-8-5z" fill="#e8b020" />
    </>
  ),
  helpGreen: (
    <>
      <circle cx="17" cy="17" r="14" fill="#27a727" stroke="#0c5a0c" />
      <text x="6" y="15" fontSize="14" fontWeight="bold" fill="#0c3c0c" fontFamily="Liberation Sans">?</text>
    </>
  ),
  faq: (
    <>
      <text x="7" y="10" fontSize="9" fill="#555" fontFamily="Liberation Sans">FAQ</text>
      <path d="M8 14h20l4 6-6 1v9H11v-9l-6-1z" fill="#5c3c3c" />
    </>
  ),
  wireBlue: WIRE("#3a3af0", "none"),
  wireGrid: (
    <>
      {WIRE("#444", "#cbb899")}
      <path d="M8 14h20M8 20h20M13 6v24M23 6v24" stroke="#333" strokeWidth="1.4" strokeDasharray="2 2" />
    </>
  ),
  wireGrey: WIRE("#333", "#7d80a0"),
  houseTan: HOUSE("#d4bb83", "#7a4a40", "#9aa8ac"),
  houseBlue: HOUSE("#3c6e96", "#6f9cc4", "#224c70"),
  houseGreen: HOUSE("#90e030", "#1010e0", "#f0c030"),
  houseHelp: (
    <>
      {HOUSE("#90e030", "#1010e0", "#f0c030")}
      <text x="3" y="13" fontSize="14" fontWeight="bold" fill="#d02020" fontFamily="Liberation Sans">?</text>
    </>
  ),
  scaleWin: (
    <>
      <rect x="5" y="2" width="27" height="33" fill="#fff" stroke="#555" />
      <rect x="5" y="2" width="27" height="6" fill="#14148c" />
      <rect x="9" y="11" width="6" height="20" fill="url(#rainbow)" />
      <path d="M18 14h6M18 20h6M18 26h6" stroke="#333" strokeWidth="1.5" />
    </>
  ),
  pickScale: (
    <>
      <rect x="16" y="2" width="8" height="26" fill="url(#rainbow)" />
      <path d="M4 8v22l5-5 4 9 3-1-4-9h7z" fill="#111" />
    </>
  ),
  camera: (
    <>
      <circle cx="11" cy="7" r="4" fill="#111" />
      <circle cx="20" cy="7" r="4" fill="#111" />
      <rect x="6" y="10" width="18" height="12" fill="#111" />
      <path d="M24 13l6-3v10l-6-3zM13 22l-7 12M16 22l1 12" stroke="#111" strokeWidth="2" fill="#111" />
    </>
  ),
  first: <path d="M8 3h4v30H8zM27 3v20L13 15z" fill="#111" />,
  prev: <path d="M17 2v26L4 15zM31 2v26L17 15z" fill="#111" />,
  play: <path d="M9 3l18 14L9 31z" fill="#111" />,
  next: <path d="M4 2v26l13-13zM17 2v26l13-13z" fill="#111" />,
  last: <path d="M8 3v20l14-8zM24 3h4v30h-4z" fill="#111" />,
};

const TOP_LEFT = [["fresh", "open", "save", "saveas"], ["warn"], ["zone", "windowAdd"], ["pick", "infoWin", "listWin", "binoculars"], ["swap", "wrench"], ["yellowCubes"], ["helpGreen", "faq"]];
const TOP_RIGHT = [["wireBlue", "wireGrid", "wireGrey"], ["houseTan", "houseBlue", "houseGreen"], ["houseHelp", "scaleWin", "pickScale"], ["camera", "first", "prev", "play", "next", "last"]];

const MENU = [
  ["ファイル(", "F", ")"],
  ["編集(", "E", ")"],
  ["表示(", "V", ")"],
  ["カメラ(", "C", ")"],
  ["描画(", "R", ")"],
  ["ツール(", "T", ")"],
  ["ウィンドウ(", "W", ")"],
  ["拡張機能 (", "x", ")"],
  ["ヘルプ(", "H", ")"],
];

const OBJECT_TEXT = `BuildingSurface:Detailed,
  F43B73,  !- Name
  Floor,  !- Surface Type
  GROUND_FLOOR,  !- Construction Name
  BASE,  !- Zone Name
  Ground,  !- Outside Boundary Condition
  BOUNDARY=INPUT 1*TGROUND,  !- Outside Boundary Condition Object
  NoSun,  !- Sun Exposure
  NoWind,  !- Wind Exposure
  0.0,  !- TRNSYS 17 - additional surface data
  4,  !- Number of Vertices
  10.50000000000,  !- Vertex 1 X-coordinate {m}
  4.84000000000,  !- Vertex 1 Y-coordinate {m}
  0.00000000000,  !- Vertex 1 Z-coordinate {m}
  10.50000000000,  !- Vertex 2 X-coordinate {m}
  0.00000000000,  !- Vertex 2 Y-coordinate {m}
  0.00000000000,  !- Vertex 2 Z-coordinate {m}
  0.00000000000,  !- Vertex 3 X-coordinate {m}
  0.00000000000,  !- Vertex 3 Y-coordinate {m}
  0.00000000000,  !- Vertex 3 Z-coordinate {m}`;

const COLLAPSED = ["スタイル", "タグ", "影", "シーン", "インストラクタ"];
const ZONES = ["ROOF", "ROOM1", "ROOM2"];

function ToolGroups({ groups, active }) {
  return groups.map((group, i) => (
    <React.Fragment key={i}>
      {i > 0 && <ToolSep />}
      {group.map((name) => (
        <ToolButton key={name} $active={name === active}>
          <Glyph>
            {TOP[name]}
            <Badge />
          </Glyph>
        </ToolButton>
      ))}
    </React.Fragment>
  ));
}

function PanelBar({ title, open, mb }) {
  return (
    <PanelHeader $mb={mb}>
      <Caret $open={open} />
      {title}
      <PanelClose>×</PanelClose>
    </PanelHeader>
  );
}

const Eye = () => (
  <Glyph size={20} vb={20}>
    <path d="M1 10c4-7 14-7 18 0-4 7-14 7-18 0z" fill="#fff" stroke="#000" strokeWidth="2" />
    <circle cx="10" cy="10" r="4" fill="#000" />
  </Glyph>
);
const AddBadge = () => (
  <svg width="16" height="24" viewBox="0 0 16 24">
    <rect width="16" height="24" fill="#111" />
    <rect x="1" y="1" width="14" height="10" fill="#fff" />
    <path d="M3 2h10L8 9z" fill="#111" />
    <path d="M3 17h10M8 13v9" stroke="#fff" strokeWidth="2.5" />
  </svg>
);
const StackIcon = ({ plus, grey }) => (
  <Glyph size={30} vb={30}>
    <path d="M8 6l12-4 8 5v14l-12 6-8-5z" fill={grey ? "#666" : "#333"} />
    <path d="M9 8l11-4 6 4-11 4zM9 14l15-5v3L9 17z" fill={grey ? "#ddd" : "#e8e0b0"} />
    {plus && (
      <>
        <circle cx="8" cy="21" r="6.5" fill="#fff" stroke="#111" strokeWidth="1.5" />
        <path d="M4 21h8M8 17v8" stroke="#111" strokeWidth="1.5" />
      </>
    )}
    {grey && <path d="M17 15L27 3l2 2-10 12z" fill="#ccc" stroke="#666" />}
  </Glyph>
);
const GoArrow = () => (
  <Glyph size={26} vb={26}>
    <path d="M12 1l13 12-13 12z" fill="#111" />
    <rect x="2" y="7" width="12" height="16" fill="#d8dde6" stroke="#111" />
    <rect x="3" y="8" width="10" height="5" fill="#3c7fd8" />
  </Glyph>
);
const Dropper = () => (
  <Glyph size={28} vb={28}>
    <path d="M3 26l1-5L17 8l4 4L8 25z" fill="#fff" stroke="#777" />
    <path d="M17 6l4-4c2-1 5 2 4 4l-4 4 1 2-2 1-6-6 1-2z" fill="#777" />
  </Glyph>
);

export default function App() {
  return (
    <Page>
      <GlobalStyle />
      <TitleBar>
        <SkpLogo />
        <span>2室モデル寸法 - SketchUp Pro 2023</span>
        <WinControls $pr={29} $gap={48}>
          <Glyph size={20} vb={20}>
            <path d="M3 10h14" stroke="#222" strokeWidth="1.2" />
          </Glyph>
          <Glyph size={20} vb={20}>
            <path d="M4 6h10v10H4zM7 6V3h10v10h-3" stroke="#222" strokeWidth="1.2" />
          </Glyph>
          <Glyph size={20} vb={20}>
            <path d="M3 3l14 14M17 3L3 17" stroke="#222" strokeWidth="1.2" />
          </Glyph>
        </WinControls>
      </TitleBar>

      <MenuBar>
        {MENU.map(([head, key, tail]) => (
          <MenuItem key={key}>
            {head}
            <u>{key}</u>
            {tail}
          </MenuItem>
        ))}
      </MenuBar>

      <svg width="0" height="0" style={{ position: "absolute" }}>
        <defs>
          <linearGradient id="rainbow" x1="0" y1="0" x2="0" y2="1">
            <stop offset="0" stopColor="#f00" />
            <stop offset="0.35" stopColor="#ff0" />
            <stop offset="0.6" stopColor="#0d0" />
            <stop offset="1" stopColor="#00f" />
          </linearGradient>
        </defs>
      </svg>

      <ToolRow>
        <ToolStrip>
          <ToolGroups groups={TOP_LEFT} active="infoWin" />
        </ToolStrip>
        <ToolStrip $left={63}>
          <ToolGroups groups={TOP_RIGHT} active="houseTan" />
        </ToolStrip>
      </ToolRow>

      <Middle>
        <LeftDock>
          <LeftBar>
            <LeftHandle />
            {LEFT_GROUPS.map((group, i) => (
              <React.Fragment key={i}>
                {i > 0 && <LeftSep />}
                <LeftGrid>
                  {group.map((name) => (
                    <LeftButton key={name} $active={name === "select"}>
                      <Glyph>{TOOLS[name]}</Glyph>
                    </LeftButton>
                  ))}
                </LeftGrid>
              </React.Fragment>
            ))}
          </LeftBar>
        </LeftDock>

        <Viewport>
          <Scene width="3070" height="1930" viewBox="100 117 3070 1930">
            <defs>
              <pattern id="backface" width="8" height="8" patternUnits="userSpaceOnUse">
                <rect width="8" height="8" fill="#6c6c6c" />
                <rect width="2" height="2" fill="#1414e8" />
                <rect x="4" y="4" width="2" height="2" fill="#1414e8" />
              </pattern>
              <linearGradient id="sideStrip" gradientUnits="userSpaceOnUse" x1="2571" y1="899" x2="2919" y2="1314">
                <stop offset="0" stopColor="#b98d00" />
                <stop offset="0.55" stopColor="#c89700" />
                <stop offset="1" stopColor="#d6a000" />
              </linearGradient>
            </defs>
            {/* hidden axes */}
            <g stroke="#9a9a9a" strokeWidth="1.5" strokeDasharray="7 7" fill="none">
              <path d="M100 431L2862 2047" />
              <path d="M1690 117L3170 1690" />
              <path d="M747 2047L842 1480" />
              <path d="M700 1869L3170 1265" />
            </g>
            {/* model */}
            <polygon points="919,837 2429,115 2554,796 839,1399" fill="#c7bb8d" />
            <polygon points="2429,115 2572,208 2778,700 2902,1224 2554,796" fill="#a89c78" />
            <g stroke="#8e9092" strokeWidth="1.5" fill="none">
              <path d="M919 837L2429 115" />
              <path d="M909 902L2372 190" />
              <path d="M1553 600L1553 1145" />
            </g>
            <polygon points="1309,853 1291,1161 1029,1258 1060,962" fill="#9fadaa" />
            <polygon points="1309,853 1291,1161 1060,962" fill="#9aa8a4" />
            <polygon points="2128,497 2162,840 1934,923 1789,798 1783,649" fill="#93a3a1" />
            <polygon points="1789,798 1934,923 1793,975" fill="#9dadaa" />
            <polygon points="839,1399 2551,797 2571,899 839,1477" fill="#d6a000" />
            <polygon points="2551,797 2571,899 2900,1223" fill="#b98d00" />
            <polygon points="2571,899 2900,1223 2919,1314" fill="url(#sideStrip)" />
            <polygon points="2571,899 2919,1314 1368,1696 839,1484" fill="url(#backface)" />
            {/* edges */}
            <g fill="none">
              <path d="M839 1399L1553 1147" stroke="#000" strokeWidth="2.5" />
              <path d="M1553 1147L2551 797" stroke="#85857a" strokeWidth="1.5" />
              <path d="M2551 797L2900 1223L2919 1314" stroke="#000" strokeWidth="2" />
              <path d="M2551 797L2571 899" stroke="#6e5600" strokeWidth="1" />
              <path d="M839 1477L2571 899" stroke="#3a3a3a" strokeWidth="1.5" />
              <path d="M2919 1314L1368 1696" stroke="#000" strokeWidth="3" />
              <path d="M839 1484L1368 1696L2243 2047" stroke="#16b016" strokeWidth="1.5" />
              <path d="M2571 899L3170 698" stroke="#d02020" strokeWidth="1.5" />
              <path d="M1024 117L839 1477" stroke="#2020c8" strokeWidth="1.5" />
            </g>
            {/* bounding box of the selected face */}
            <g stroke="#222" strokeWidth="2" strokeDasharray="2 4" fill="none">
              <path d="M839 1526L1367 1730L2968 1344L2935 1201L2571 729L839 1359" />
              <path d="M2571 729V899M1367 1730L1368 1696M2968 1344L2919 1314M2571 729L2903 1223" />
            </g>
          </Scene>

          <Dialog>
            <DialogTitle>
              <SkpLogo />
              <span>Object Info</span>
              <WinControls $pr={26} $gap={49}>
                <Glyph size={20} vb={20}>
                  <path d="M3 10h14" stroke="#999" strokeWidth="1.4" />
                </Glyph>
                <Glyph size={20} vb={20}>
                  <rect x="4" y="3" width="13" height="15" rx="1.5" stroke="#888" strokeWidth="1.6" />
                </Glyph>
                <Glyph size={20} vb={20}>
                  <path d="M3 3l14 14M17 3L3 17" stroke="#777" strokeWidth="1.5" />
                </Glyph>
              </WinControls>
            </DialogTitle>
            <DialogBody>
              <Group $h={346} $pl={31}>
                <legend>Object Inputs</legend>
                <FormRow $mt={16}>
                  <FormLabel>Class:</FormLabel>
                  <FormValue>BuildingSurface:Detailed</FormValue>
                </FormRow>
                <FormRow $mt={12}>
                  <FormLabel>Name:</FormLabel>
                  <NameInput>F43B73</NameInput>
                </FormRow>
                <FormRow $mt={16}>
                  <FormLabel>Type:</FormLabel>
                  <Combo $ring={[-11, -10]}>
                    Floor
                    <ComboArrow>{CHEVRON_BLACK}</ComboArrow>
                  </Combo>
                </FormRow>
                <FormRow $mt={17}>
                  <FormLabel>Construction:</FormLabel>
                  <Combo $ring={[-4, -8]}>
                    GROUND_FLOOR
                    <ComboArrow>{CHEVRON_BLACK}</ComboArrow>
                  </Combo>
                </FormRow>
                <FormRow $mt={17}>
                  <FormLabel>Zone:</FormLabel>
                  <Combo $disabled>
                    BASE
                    <ComboArrow>{CHEVRON_GREY}</ComboArrow>
                  </Combo>
                </FormRow>
                <FormRow $mt={17}>
                  <FormLabel>Outside Boundary Condition:</FormLabel>
                  <Combo $ring={[-10, -8]}>
                    Ground
                    <ComboArrow>{CHEVRON_BLACK}</ComboArrow>
                  </Combo>
                </FormRow>
                <FormRow $mt={17}>
                  <FormLabel>Outside Boundary Object:</FormLabel>
                  <Combo $disabled $empty>
                    <ComboArrow>{CHEVRON_GREY}</ComboArrow>
                  </Combo>
                </FormRow>
              </Group>
              <Group $h={119} $pl={31}>
                <legend>Object Summary</legend>
                <SummaryRow $mt={18} $cols="85px 82px 123px 88px 134px auto">
                  <span>Vertices:</span>
                  <span>4</span>
                  <span>Sub Surfaces:</span>
                  <span>0</span>
                  <span>Percent Glazing:</span>
                  <span>0.0 %</span>
                </SummaryRow>
                <SummaryRow $mt={15} $cols="102px 229px 85px auto">
                  <span>Gross Area:</span>
                  <span>50.82 (m²)</span>
                  <span>Net Area:</span>
                  <span>50.82 (m²)</span>
                </SummaryRow>
              </Group>
              <Group $h={480} $pl={20} $pr={8}>
                <legend>Object Text</legend>
                <TextBox>
                  <TextLines>{OBJECT_TEXT}</TextLines>
                  <TextScroll>
                    <svg width="20" height="14" viewBox="0 0 20 14" fill="none" stroke="#666" strokeWidth="3.5">
                      <path d="M2 12l8-9 8 9" />
                    </svg>
                    <TextThumb />
                    <svg width="20" height="14" viewBox="0 0 20 14" fill="none" stroke="#555" strokeWidth="3.5">
                      <path d="M2 2l8 9 8-9" />
                    </svg>
                  </TextScroll>
                </TextBox>
              </Group>
            </DialogBody>
          </Dialog>
        </Viewport>

        <Tray>
          <TrayTitle>
            <span>デフォルトのトレイ</span>
            <TrayPin>
              <Glyph size={14} vb={14}>
                <path d="M4 1h6v6l2 2H2l2-2zM7 9v5" fill="#667" stroke="#667" />
              </Glyph>
            </TrayPin>
            <TrayPin>
              <Glyph size={14} vb={14}>
                <path d="M2 1l10 12M12 1L2 13" stroke="#445" strokeWidth="1.5" />
              </Glyph>
            </TrayPin>
          </TrayTitle>
          <TrayBody>
            <Panels>
              <TrayGripRow>
                <TrayGrip />
              </TrayGripRow>

              <PanelBar title="マテリアル" open />
              <TopRow $h={114} $rule>
                <Swatch />
                <GreyField $w={484} $h={26}>デフォルト</GreyField>
                <SideIcons $gap={7}>
                  <AddBadge />
                  <StackIcon plus />
                  <svg width="32" height="32" viewBox="0 0 32 32">
                    <path d="M0 0h32v32H0z" fill="#fff" />
                    <path d="M0 0l32 32H0z" fill="#a3b0b8" />
                  </svg>
                </SideIcons>
              </TopRow>
              <Tabs $h={38} $pl={2}>
                <Tab $w={68}>選択</Tab>
                <Tab $w={73} $active>編集</Tab>
                <TabIcon>
                  <Dropper />
                </TabIcon>
              </Tabs>
              <Editor>
                <SectionHead $h={53}>色</SectionHead>
                <PickerRow>
                  <PickerLabel>ピッカー:</PickerLabel>
                  <PickerSelect>
                    カラーホイール
                    <svg width="10" height="7" viewBox="0 0 10 7" fill="none" stroke="#aaa" strokeWidth="1.2">
                      <path d="M1 1l4 4 4-4" />
                    </svg>
                  </PickerSelect>
                  <WhiteSwatch $w={42} $h={33} $ml={5} />
                  <PickerIcon $ml={12}>
                    <StackIcon grey />
                  </PickerIcon>
                  <PickerIcon $ml={15}>
                    <Glyph size={28} vb={28}>
                      <rect x="3" y="8" width="18" height="14" fill="#888" stroke="#555" />
                      <path d="M8 25h8M12 22v3" stroke="#555" strokeWidth="2" />
                      <path d="M14 14l10-11 3 3-11 10z" fill="#bbb" stroke="#666" />
                    </Glyph>
                  </PickerIcon>
                </PickerRow>
                <ColorSlider>
                  <SliderHandle />
                </ColorSlider>
                <SectionHead $h={37}>テクスチャ</SectionHead>
                <CheckRow $mt={13}>
                  <CheckBox />
                  テクスチャ イメージを使用する
                </CheckRow>
                <FlatInput>
                  <GreyField $w={243} $h={27} />
                  <Glyph size={28} vb={28}>
                    <path d="M2 12h8l2 2h10l-3 12H2z" fill="#8e8e8e" />
                    <path d="M7 11l2-8 8 6-3 2z" fill="#777" />
                  </Glyph>
                  <Glyph size={28} vb={28}>
                    <path d="M6 6l13-3 6 5v13l-12 5-7-5z" fill="#666" />
                    <path d="M7 9l12-4 4 3-11 4zM7 15l15-5v3L7 18z" fill="#ddd" />
                  </Glyph>
                </FlatInput>
                <SizeRow>
                  <SizeFields>
                    <SizeField>
                      <Glyph size={20} vb={20}>
                        <path d="M1 10l6-5v3h6V5l6 5-6 5v-3H7v3z" fill="#888" />
                      </Glyph>
                      <GreyField $w={108} $h={27} $fs={16}>0.30 m</GreyField>
                    </SizeField>
                    <SizeField>
                      <Glyph size={20} vb={20}>
                        <path d="M10 0l5 6h-3v8h3l-5 6-5-6h3V6H5z" fill="#888" />
                      </Glyph>
                      <GreyField $w={108} $h={27} $fs={16}>0.30 m</GreyField>
                    </SizeField>
                  </SizeFields>
                  <Glyph size={40} vb={40}>
                    <path d="M4 4c8 0 6 6 6 10s2 5 6 6c-4 1-6 2-6 6s2 10-6 10" stroke="#555" strokeWidth="1.5" />
                    <rect x="21" y="7" width="7" height="13" rx="3" stroke="#777" strokeWidth="2" />
                    <rect x="21" y="19" width="7" height="13" rx="3" stroke="#777" strokeWidth="2" />
                  </Glyph>
                  <TintCol>
                    <CheckRow $gap={7}>
                      <CheckBox />
                      着色
                    </CheckRow>
                    <ResetRow>
                      <WhiteSwatch $w={33} $h={33} />
                      色をリセット
                    </ResetRow>
                  </TintCol>
                </SizeRow>
                <SectionHead $h={38}>不透明度</SectionHead>
                <OpacityRow>
                  <OpacityBar>
                    <OpacityHandle />
                  </OpacityBar>
                  <SpinBox>
                    100
                    <SpinArrows>
                      <span>▲</span>
                      <span>▼</span>
                    </SpinArrows>
                  </SpinBox>
                </OpacityRow>
              </Editor>
              <ThinBox />

              <PanelBar title="コンポーネント" open />
              <TopRow $h={127}>
                <Thumb>
                  <Glyph size={88} vb={36}>
                    <Cubes c="#38384a" fill="#9c9c80" sw={2} />
                  </Glyph>
                </Thumb>
                <CompFields>
                  <GreyField $w={460} $h={26} />
                  <GreyField $w={460} $h={96} $mt={4} $sunken />
                </CompFields>
                <SideIcons $gap={18}>
                  <AddBadge />
                  <Glyph size={22} vb={36}>
                    <Cubes c="#555" fill="#999" sw={3} />
                  </Glyph>
                </SideIcons>
              </TopRow>
              <Tabs $h={26}>
                <Tab $w={73} $active>選択</Tab>
                <Tab $w={70}>編集</Tab>
                <Tab $w={70}>統計</Tab>
              </Tabs>
              <Toolbox>
                <SquareBtn $w={34}>
                  <Glyph size={30} vb={30}>
                    <path d="M4 7h8v8H4zM4 19h8v8H4z" fill="#fff" stroke="#111" strokeWidth="2" />
                    <path d="M15 8h8M15 12h8M15 20h8M15 24h8" stroke="#111" strokeWidth="2" />
                    <path d="M24 15h6l-3 4z" fill="#111" />
                  </Glyph>
                </SquareBtn>
                <SquareBtn $w={33}>
                  <Glyph size={30} vb={30}>
                    <path d="M15 3L2 16h4v12h18V16h4z" fill="#fff" stroke="#111" strokeWidth="2" />
                    <rect x="12" y="17" width="6" height="11" fill="#111" />
                  </Glyph>
                </SquareBtn>
                <SquareBtn $w={21}>
                  <Glyph size={14} vb={14}>
                    <path d="M1 4h12L7 11z" fill="#111" />
                  </Glyph>
                </SquareBtn>
                <SearchBox>
                  3D ギャラリー
                  <SearchGlass>
                    <Glyph size={24} vb={24}>
                      <circle cx="14" cy="9" r="6" stroke="#111" strokeWidth="2" />
                      <path d="M9 14l-6 7" stroke="#111" strokeWidth="2.5" />
                    </Glyph>
                  </SearchGlass>
                </SearchBox>
                <SquareBtn $w={33}>
                  <GoArrow />
                </SquareBtn>
              </Toolbox>
              <ListBox>
                <ListMain>
                  <Glyph size={96} vb={96}>
                    <rect x="5" y="1" width="90" height="90" fill="#fff" stroke="#aaa" />
                    <rect x="2" y="3" width="90" height="91" fill="#fff" stroke="#aaa" />
                    <rect x="0.5" y="5" width="90" height="90" fill="#fff" stroke="#999" />
                    <path d="M15 62l13 15 1-20z" fill="#999" />
                    <path d="M19 30l17-4 2 4 35-7v10l-45 44z" fill="#78b4dc" stroke="#567" />
                    <path d="M28 32l45-9v36L28 77z" fill="#b89a70" stroke="#567" strokeWidth="1.5" />
                  </Glyph>
                  <ListText>動的コンポーネント トレーニング</ListText>
                </ListMain>
                <ListScroll>
                  <ListThumb />
                </ListScroll>
              </ListBox>
              <CompFooter>
                <Glyph size={20} vb={20}>
                  <path d="M11 1L2 10l9 9v-5h6V6h-6z" fill="#fff" stroke="#666" strokeWidth="2" />
                </Glyph>
                コンポーネント
                <Glyph size={20} vb={20}>
                  <path d="M9 1l9 9-9 9v-5H3V6h6z" fill="#fff" stroke="#666" strokeWidth="2" />
                </Glyph>
              </CompFooter>
              <ThinBox />

              {COLLAPSED.map((title) => (
                <PanelBar key={title} title={title} mb={1} />
              ))}
              <PanelBar title="アウトライン表示" open />
              <FilterRow>
                フィルタ:
                <FilterInput />
                <GoArrow />
              </FilterRow>
              <Tree>
                <TreeRow $pl={56} $gap={8}>
                  <Glyph size={17} vb={17}>
                    <rect x="1" y="1" width="15" height="15" fill="#eee" stroke="#222" strokeWidth="1.5" />
                    <path d="M8.5 3L4 8h1.5v5h6V8H13z" fill="#fff" stroke="#222" />
                  </Glyph>
                  2室モデル寸法
                </TreeRow>
                <TreeRow $pl={17} $gap={10} $color="#1379dc">
                  <EyeSlot>
                    <Eye />
                  </EyeSlot>
                  <ZoneMark $hollow />
                  Trnsys3d Zone:&nbsp; BASE
                </TreeRow>
                {ZONES.map((zone) => (
                  <TreeRow key={zone} $pl={17} $gap={10}>
                    <EyeSlot>
                      <Eye />
                    </EyeSlot>
                    <ZoneMark />
                    Trnsys3d Zone:&nbsp; {zone}
                  </TreeRow>
                ))}
              </Tree>
              <ThinBox $mt={13} />
            </Panels>
            <TrayScroll>
              <TrayThumb />
            </TrayScroll>
          </TrayBody>
        </Tray>
      </Middle>

      <StatusBar>
        <Glyph size={22} vb={22}>
          <path d="M11 1c6 0 8 5 7 9l-7 11-7-11C3 6 5 1 11 1z" fill="#eee" stroke="#aaa" strokeWidth="2" />
          <circle cx="11" cy="8" r="2.5" fill="#aaa" />
        </Glyph>
        <StatusInfo>
          <Glyph size={24} vb={24}>
            <circle cx="12" cy="12" r="10" fill="#fff" stroke="#111" strokeWidth="2" />
            <circle cx="12" cy="7" r="2" fill="#111" />
            <path d="M9 10h6v3l-1 6h-4l-1-6z" fill="#111" />
          </Glyph>
        </StatusInfo>
        <StatusDivider $ml={12} />
        <StatusText>オブジェクトをクリックまたはドラッグ。Shift = 追加/除外。Ctrl = 追加。Shift + Ctrl = 除外。</StatusText>
        <StatusDivider />
      </StatusBar>
    </Page>
  );
}
